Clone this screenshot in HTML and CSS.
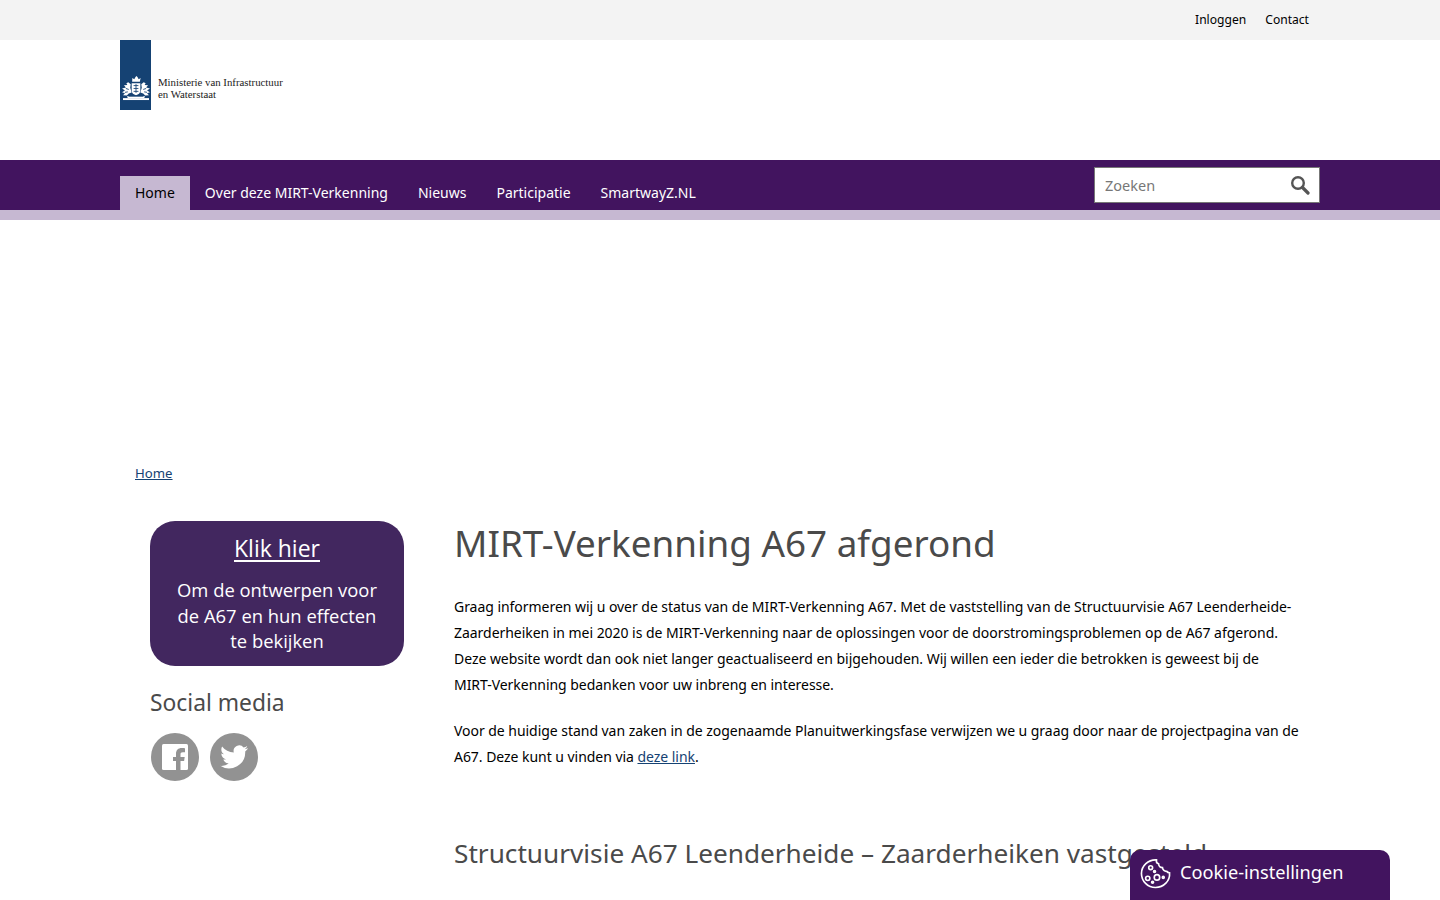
FILE: index.html
```html
<!DOCTYPE html>
<html lang="nl">
<head>
    <meta charset="UTF-8">
    <title>MIRT-Verkenning A67 afgerond</title>
    <link rel="stylesheet" href="styles.css">
</head>
<body>
    <div class="topbar">
        <div class="container topbar-inner">
            <a href="#" class="top-link">Inloggen</a>
            <a href="#" class="top-link">Contact</a>
        </div>
    </div>

    <header class="header">
        <div class="container">
            <a href="#" class="logo">
                <span class="logo-mark">
                    <svg width="30" height="26" viewBox="0 0 31 27">
                        <g fill="#fff">
                            <path d="M11.500 7h8l.8-4-2 1.300-1.300-2.300-1-1-1 1-1.300 2.300-2-1.300z"/>
                            <path d="M11 8.500h9v7.500c0 3-2 4-4.500 5-2.500-1-4.500-2-4.500-5z"/>
                            <path d="M10 9.500 7.500 7.500 5.500 8.500l1 2-3.500.2 2 2.300-4 1 3 2-3 2 3 1-2 2 4 .2 2-2 3-1-1.500-5z"/>
                            <path d="M21 9.500l2.500-2 2 1-1 2 3.500.2-2 2.300 4 1-3 2 3 2-3 1 2 2-4 .2-2-2-3-1 1.500-5z"/>
                            <rect x="2" y="24" width="27" height="2"/>
                            <path d="M6 22h19l-1 2H7z"/>
                        </g>
                        <path d="M13 11h5M13 14h5M13 17h5M15.500 9.500v9M5 14l3 1M4 18l3-.5M26 14l-3 1M27 18l-3-.5M8 22h15" stroke="#154273" stroke-width=".9" fill="none"/>
                    </svg>
                </span>
                <span class="logo-text">Ministerie van Infrastructuur<br>en Waterstaat</span>
            </a>
        </div>
    </header>

    <nav class="nav">
        <div class="container nav-inner">
            <ul class="nav-list">
                <li><a href="#" class="nav-link active">Home</a></li>
                <li><a href="#" class="nav-link">Over deze MIRT-Verkenning</a></li>
                <li><a href="#" class="nav-link">Nieuws</a></li>
                <li><a href="#" class="nav-link">Participatie</a></li>
                <li><a href="#" class="nav-link">SmartwayZ.NL</a></li>
            </ul>
            <form class="search">
                <input type="text" class="search-input" placeholder="Zoeken">
                <svg class="search-icon" width="20" height="20" viewBox="0 0 20 20">
                    <circle cx="8" cy="8" r="5.800" fill="none" stroke="#555" stroke-width="2.400"/>
                    <path d="M12.500 12.500 18 18" stroke="#555" stroke-width="3.200" stroke-linecap="round"/>
                </svg>
            </form>
        </div>
    </nav>
    <div class="nav-strip"></div>

    <div class="container">
        <div class="breadcrumb"><a href="#">Home</a></div>

        <div class="columns">
            <aside class="sidebar">
                <div class="promo">
                    <a href="#" class="promo-title">Klik hier</a>
                    <p class="promo-text">Om de ontwerpen voor<br>de A67 en hun effecten<br>te bekijken</p>
                </div>
                <h3 class="side-heading">Social media</h3>
                <div class="social">
                    <a href="#" class="social-icon">
                        <svg width="48" height="48" viewBox="0 0 48 48">
                            <circle cx="24" cy="24" r="24" fill="#929292"/>
                            <rect x="11" y="11" width="26" height="26" rx="1.500" fill="#fff"/>
                            <path d="M25 37v-9h-3v-4h3v-3c0-4 2.300-6 5.600-6 1.500 0 2.800.1 3.400.2v4h-2.200c-1.800 0-2.300.8-2.300 2.200V24h4.200l-.6 4h-3.600v9z" fill="#929292"/>
                        </svg>
                    </a>
                    <a href="#" class="social-icon">
                        <svg width="48" height="48" viewBox="0 0 48 48">
                            <circle cx="24" cy="24" r="24" fill="#929292"/>
                            <path d="M38 15.200c-1 .5-2.100.8-3.300 1 1.200-.7 2.100-1.900 2.500-3.200-1.100.7-2.300 1.200-3.600 1.400a5.700 5.700 0 0 0-9.800 5.200c-4.700-.2-8.900-2.500-11.700-6-1.500 2.600-.8 6 1.800 7.700-.9 0-1.800-.3-2.600-.7 0 2.800 2 5.200 4.600 5.700-.8.200-1.700.3-2.600.1.700 2.300 2.900 4 5.400 4a11.500 11.500 0 0 1-8.500 2.400 16.200 16.200 0 0 0 25-14.400c1.100-.8 2.100-1.800 2.800-2.900z" fill="#fff"/>
                        </svg>
                    </a>
                </div>
            </aside>

            <main class="content">
                <h1>MIRT-Verkenning A67 afgerond</h1>
                <p>Graag informeren wij u over de status van de MIRT-Verkenning A67. Met de vaststelling van de Structuurvisie A67 Leenderheide-Zaarderheiken in mei 2020 is de MIRT-Verkenning naar de oplossingen voor de doorstromingsproblemen op de A67 afgerond. Deze website wordt dan ook niet langer geactualiseerd en bijgehouden. Wij willen een ieder die betrokken is geweest bij de <span class="nowrap">MIRT-Verkenning</span> bedanken voor uw inbreng en interesse.</p>
                <p>Voor de huidige stand van zaken in de zogenaamde Planuitwerkingsfase verwijzen we u graag door naar de projectpagina van de A67. Deze kunt u vinden via <a href="#">deze link</a>.</p>
                <h2>Structuurvisie A67 Leenderheide – Zaarderheiken vastgesteld</h2>
            </main>
        </div>
    </div>

    <button class="cookie-btn">
        <svg width="31" height="31" viewBox="0 0 32 32" fill="none" stroke="#fff" stroke-width="1.700">
            <path d="M17 2c-.4 2 .6 3.600 2.200 4 0 2.300 1.800 4 4 4 .2 2.200 2.200 4 4.400 3.700.6 1 1.600 1.600 2.900 1.600.7 8.200-6 15.200-14.500 15.200C8 30.500 1.500 24 1.500 16S8.500 1.500 17 2z"/>
            <circle cx="11" cy="10" r="2"/>
            <circle cx="17.500" cy="20" r="2.800"/>
            <circle cx="8" cy="21" r="2.200"/>
            <circle cx="15" cy="14" r="1"/>
            <circle cx="24" cy="20" r="1"/>
            <circle cx="13" cy="25" r="1"/>
        </svg>
        <span class="cookie-label">Cookie-instellingen</span>
    </button>
</body>
</html>
```

FILE: styles.css
```css
* {
    margin: 0;
    padding: 0;
    box-sizing: border-box;
}

html, body {
    height: 100%;
    overflow: hidden;
}

body {
    font-family: "Noto Sans", "Open Sans", sans-serif;
    font-size: 15px;
    color: #000;
    background: #fff;
}

a {
    color: #154273;
}

.container {
    width: 1200px;
    margin: 0 auto;
}

.topbar {
    height: 40px;
    background: #f3f3f3;
}

.topbar-inner {
    display: flex;
    justify-content: flex-end;
    align-items: center;
    gap: 19px;
    height: 38px;
    padding-right: 11px;
}

.top-link {
    font-size: 12.100px;
    color: #000;
    text-decoration: none;
}

.header {
    height: 120px;
}

.logo {
    display: flex;
    align-items: flex-start;
    text-decoration: none;
}

.logo-mark {
    display: flex;
    align-items: flex-end;
    justify-content: center;
    width: 31px;
    height: 70px;
    padding-bottom: 9px;
    background: #154273;
}

.logo-text {
    margin: 36px 0 0 7px;
    font-family: "Liberation Serif", serif;
    font-size: 10.800px;
    line-height: 12px;
    color: #222;
}

.nav {
    height: 50px;
    background: #42145f;
}

.nav-inner {
    display: flex;
    justify-content: space-between;
    height: 50px;
}

.nav-list {
    display: flex;
    list-style: none;
    padding-top: 16px;
}

.nav-link {
    display: block;
    height: 34px;
    padding: 0 15px;
    font-size: 14px;
    line-height: 33px;
    color: #fff;
    text-decoration: none;
}

.nav-link.active {
    background: #c6b8d2;
    color: #000;
}

.search {
    position: relative;
    width: 226px;
    height: 36px;
    margin-top: 7px;
}

.search-input {
    width: 100%;
    height: 100%;
    padding: 0 40px 0 10px;
    border: 1px solid #777;
    font-family: inherit;
    font-size: 14.500px;
    background: #fff;
}

.search-input::placeholder {
    color: #777;
}

.search-icon {
    position: absolute;
    top: 8px;
    right: 10px;
}

.nav-strip {
    height: 10px;
    background: #c6b8d2;
}

.breadcrumb {
    padding: 244px 0 0 15px;
    font-size: 13.200px;
    line-height: 18px;
}

.columns {
    display: flex;
    padding: 39px 0 0 30px;
}

.sidebar {
    width: 254px;
    flex-shrink: 0;
}

.promo {
    height: 145px;
    padding-top: 9px;
    border-radius: 25px;
    background: #42275f;
    color: #fff;
    text-align: center;
}

.promo-title {
    font-family: "Open Sans", sans-serif;
    font-size: 23px;
    line-height: 36px;
    color: #fff;
    text-decoration-thickness: 2px;
    text-underline-offset: 3px;
}

.promo-text {
    margin-top: 11px;
    font-family: "Open Sans", sans-serif;
    font-size: 18.400px;
    line-height: 25.500px;
}

.side-heading {
    margin-top: 21px;
    font-size: 22.800px;
    font-weight: 400;
    line-height: 32px;
    color: #4a4a4a;
}

.social {
    display: flex;
    gap: 11px;
    margin: 14px 0 0 1px;
}

.social-icon {
    display: block;
    height: 48px;
}

.content {
    width: 852px;
    margin-left: 50px;
    font-size: 14px;
    line-height: 26px;
    letter-spacing: -0.04px;
}

.content h1 {
    margin-top: -1px;
    font-size: 36.850px;
    font-weight: 400;
    line-height: 46px;
    letter-spacing: 0;
    color: #4a4a4a;
}

.content p {
    margin-bottom: 20px;
}

.content h1 + p {
    margin-top: 28px;
}

.content h2 {
    margin-top: 66px;
    font-size: 26.200px;
    font-weight: 400;
    line-height: 34px;
    letter-spacing: 0;
    color: #4a4a4a;
}

.nowrap {
    white-space: nowrap;
}

.cookie-btn {
    position: fixed;
    right: 50px;
    bottom: 0;
    display: flex;
    align-items: center;
    gap: 9px;
    width: 260px;
    height: 50px;
    padding: 0 10px 4px;
    border: 0;
    border-radius: 10px 10px 0 0;
    background: #42145f;
    color: #fff;
    font-family: inherit;
    font-size: 18.200px;
}

.cookie-label {
    margin-bottom: 2px;
}
```
